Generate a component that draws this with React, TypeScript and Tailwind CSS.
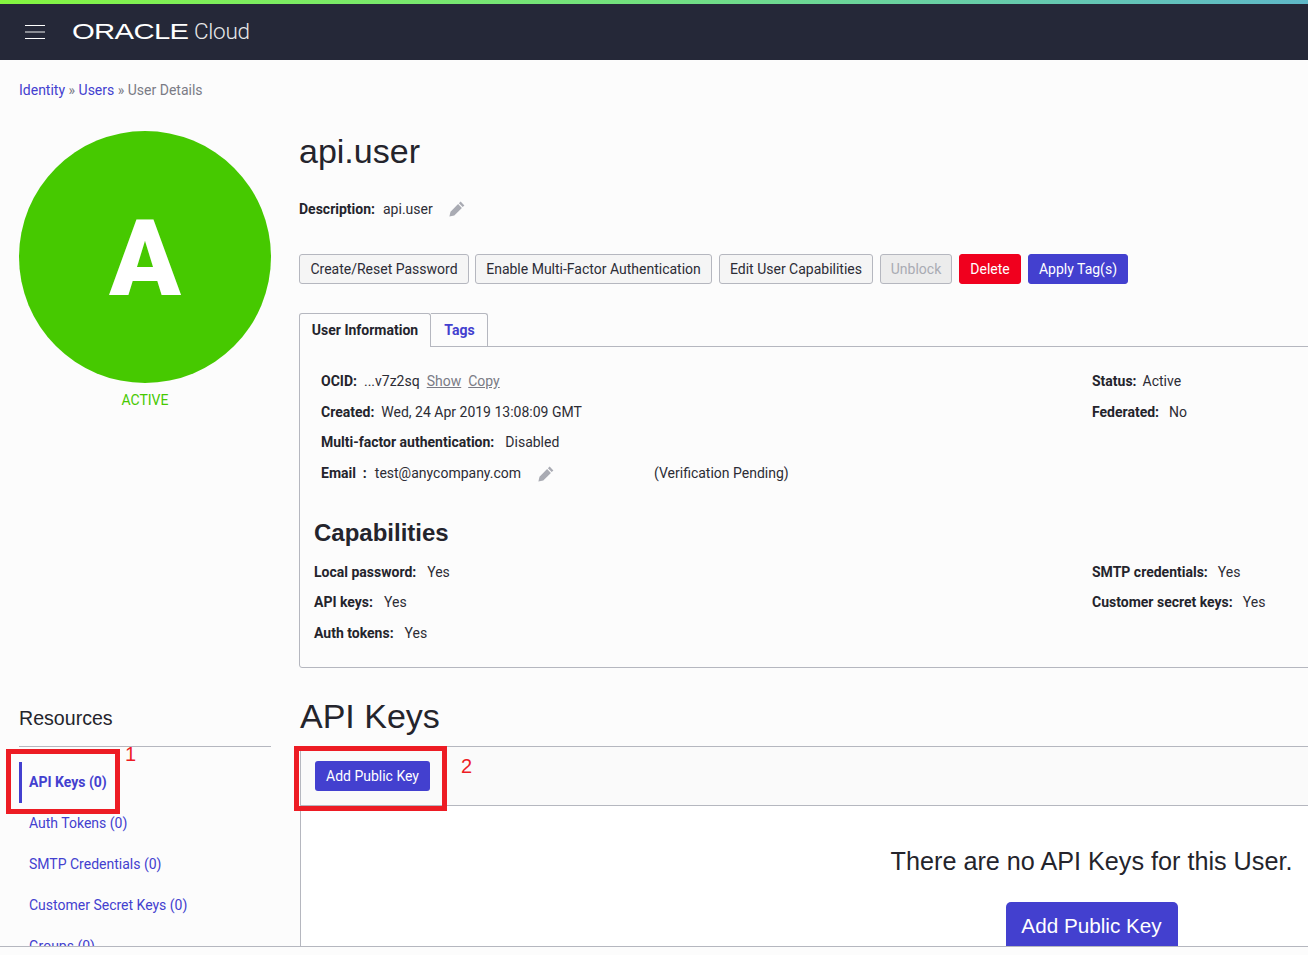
import React from "react";

const arial = "font-['Liberation_Sans',Arial,sans-serif]";

// solid pencil, tip to the lower left
function Pencil({ className = "" }: { className?: string }) {
  return (
    <svg viewBox="0 0 16 16" className={`w-[16px] h-[16px] shrink-0 ${className}`} fill="#a9abb3">
      <path d="M11.6.6l3.8 3.8-1.7 1.7-3.8-3.8zM9.1 3.1l3.8 3.8-7.6 7.6L.4 15.6l1.1-4.9z" />
    </svg>
  );
}

function Btn({ children, className = "" }: { children: React.ReactNode; className?: string }) {
  return (
    <button className={`h-[30px] rounded-[3px] border border-[#b5b7bf] bg-[#f5f5f5] text-[#2c2c35] text-[14px] whitespace-nowrap ${className}`}>
      {children}
    </button>
  );
}

function Row({ label, value, className = "" }: { label: string; value: React.ReactNode; className?: string }) {
  return (
    <div className={`flex items-center whitespace-nowrap ${className}`}>
      <span className="font-bold text-[#24242c] mr-[11px]">{label}</span>
      <span>{value}</span>
    </div>
  );
}

function NavItem({ children }: { children: React.ReactNode }) {
  return <div className="h-[41px] flex items-center pl-[10px] text-[#4340cf] text-[14px] whitespace-nowrap">{children}</div>;
}

export default function App() {
  return (
    <div className="h-[955px] w-[1308px] overflow-hidden bg-[#fcfcfc] font-['Roboto',sans-serif] text-[14px] text-[#2c2c35]">
      {/* Top bar */}
      <div className="h-[4px] bg-gradient-to-r from-[#84f53f] via-[#72e080] to-[#5fb8c8]" />
      <header className="h-[56px] bg-[#252838] flex items-center pl-[25px]">
        <div className="w-[20px] flex flex-col gap-[5px]">
          <span className="h-px bg-white" />
          <span className="h-[2px] bg-[#8a8c94]" />
          <span className="h-px bg-white" />
        </div>
        <div className="ml-[27px] flex items-center text-white whitespace-nowrap">
          <span className={`${arial} text-[22px] leading-none w-[116px] origin-left scale-x-[1.33] tracking-[-0.5px] -mt-px`}>ORACLE</span>
          <span className="text-[22.5px] font-light tracking-[-0.3px] text-[#e8e8ea] ml-[6px]">Cloud</span>
        </div>
      </header>

      {/* Scroll area */}
      <div className="h-[887px] border-b border-[#b5b7bf] overflow-hidden relative flex">
        <aside className="w-[299px] shrink-0 pl-[19px] pr-[28px]">
          <div className="pt-[20px] h-[71px] text-[14px] text-[#7a7b85] whitespace-nowrap">
            <span className="text-[#4340cf]">Identity</span> » <span className="text-[#4340cf]">Users</span> » User Details
          </div>
          <div className="w-[252px] h-[252px] pt-[5px] rounded-full bg-[#46c900] flex items-center justify-center text-white text-[105px] font-black leading-none">
            <span>A</span>
          </div>
          <div className="text-center text-[#46c900] mt-[8px] leading-[18px]">ACTIVE</div>

          <div className={`${arial} mt-[296px] text-[19.6px] text-[#24242c] leading-[26px]`}>Resources</div>
          <div className="mt-[15px] pt-[15px] border-t border-[#b5b7bf]">
            <div className="h-[41px] flex items-center pl-[7px] border-l-[3px] border-[#4340cf] text-[#4340cf] font-bold whitespace-nowrap">API Keys (0)</div>
            <NavItem>Auth Tokens (0)</NavItem>
            <NavItem>SMTP Credentials (0)</NavItem>
            <NavItem>Customer Secret Keys (0)</NavItem>
            <NavItem>Groups (0)</NavItem>
          </div>
        </aside>

        <main className="w-[1583px] shrink-0">
          <h1 className={`${arial} text-[34px] leading-[42px] mt-[70px] text-[#24242c]`}>api.user</h1>
          <div className="mt-[27px] h-[20px] flex items-center">
            <span className="font-bold text-[#24242c] mr-[8px]">Description:</span>
            <span>api.user</span>
            <Pencil className="ml-[16px]" />
          </div>
          <div className="mt-[35px] flex">
            <Btn className="w-[170px]">Create/Reset Password</Btn>
            <Btn className="w-[237px] ml-[6px]">Enable Multi-Factor Authentication</Btn>
            <Btn className="w-[154px] ml-[7px]">Edit User Capabilities</Btn>
            <Btn className="w-[72px] ml-[7px] text-[#a9abb3]! bg-[#ececec]!">Unblock</Btn>
            <Btn className="w-[62px] ml-[7px] bg-[#f0001e]! text-white! border-[#f0001e]!">Delete</Btn>
            <Btn className="w-[100px] ml-[7px] bg-[#4340cf]! text-white! border-[#4340cf]!">Apply Tag(s)</Btn>
          </div>
          <div className="mt-[29px] flex h-[34px] relative z-10">
            <div className="w-[132px] h-[34px] bg-[#fcfcfc] border border-b-0 border-[#b5b7bf] rounded-t-[3px] flex items-center justify-center font-bold text-[#24242c]">User Information</div>
            <div className="w-[57px] h-[33px] pl-px border border-l-0 border-b-0 border-[#b5b7bf] rounded-tr-[3px] flex items-center justify-center font-bold text-[#4340cf]">Tags</div>
          </div>
          <section className="-mt-px border border-[#b5b7bf] rounded-b-[3px] h-[322px] pt-[19px] flex">
            <div className="w-[792px] shrink-0 pl-[14px]">
              <div className="pl-[7px]">
                <div className="h-[31px] flex items-center whitespace-nowrap">
                  <span className="font-bold text-[#24242c] mr-[7px]">OCID:</span>
                  <span>...v7z2sq</span>
                  <span className="ml-[7px] underline text-[#7a7b85]">Show</span>
                  <span className="ml-[7px] underline text-[#7a7b85]">Copy</span>
                </div>
                <div className="h-[30px] flex items-center whitespace-nowrap">
                  <span className="font-bold text-[#24242c] mr-[7px]">Created:</span>
                  <span>Wed, 24 Apr 2019 13:08:09 GMT</span>
                </div>
                <Row label="Multi-factor authentication:" value="Disabled" className="h-[31px]" />
                <div className="h-[31px] flex items-center whitespace-nowrap">
                  <span className="font-bold text-[#24242c] mr-[8px]">Email&nbsp; :</span>
                  <span>test@anycompany.com</span>
                  <Pencil className="ml-[17px]" />
                  <span className="ml-[100px]">(Verification Pending)</span>
                </div>
              </div>
              <h2 className={`${arial} mt-[29px] font-bold text-[24px] leading-[30px] text-[#24242c]`}>Capabilities</h2>
              <div className="mt-[9px]">
                <Row label="Local password:" value="Yes" className="h-[30px]" />
                <Row label="API keys:" value="Yes" className="h-[31px]" />
                <Row label="Auth tokens:" value="Yes" className="h-[30px]" />
              </div>
            </div>
            <div>
              <div className="h-[31px] flex items-center whitespace-nowrap">
                <span className="font-bold text-[#24242c] mr-[6px]">Status:</span>
                <span>Active</span>
              </div>
              <div className="h-[31px] flex items-center whitespace-nowrap">
                <span className="font-bold text-[#24242c] mr-[10px]">Federated:</span>
                <span>No</span>
              </div>
              <div className="mt-[129px]">
                <Row label="SMTP credentials:" value="Yes" className="h-[30px] [&>span:first-child]:mr-[10px]" />
                <Row label="Customer secret keys:" value="Yes" className="h-[31px] [&>span:first-child]:mr-[10px]" />
              </div>
            </div>
          </section>

          <h2 className={`${arial} mt-[27px] pl-px text-[34px] leading-[42px] text-[#24242c]`}>API Keys</h2>
          <div className="mt-[9px] ml-px border-l border-[#b5b7bf]">
            <div className="h-[60px] border-y border-[#b5b7bf] bg-[#fafafa] flex items-start pt-[14px] pl-[14px]">
              <button className="h-[30px] w-[115px] rounded-[3px] bg-[#4340cf] text-white text-[14px]">Add Public Key</button>
            </div>
            <div className="h-[200px] bg-white flex flex-col items-center">
              <div className={`${arial} mt-[39px] text-[25.2px] leading-[32px] text-[#24242c]`}>There are no API Keys for this User.</div>
              <button className={`${arial} mt-[25px] h-[48px] w-[172px] rounded-[5px] bg-[#4340cf] text-white text-[20.7px]`}>Add Public Key</button>
            </div>
          </div>
        </main>

        {/* Annotation marks */}
        <div className="absolute left-[6px] top-[689px] w-[114px] h-[65px] border-[5px] border-[#ed1c24]" />
        <div className="absolute left-[294px] top-[686px] w-[153px] h-[65px] border-[5px] border-[#ed1c24]" />
        <span className={`${arial} absolute left-[125px] top-[682px] text-[20px] leading-[24px] text-[#ed1c24]`}>1</span>
        <span className={`${arial} absolute left-[461px] top-[694px] text-[20px] leading-[24px] text-[#ed1c24]`}>2</span>
      </div>
    </div>
  );
}
